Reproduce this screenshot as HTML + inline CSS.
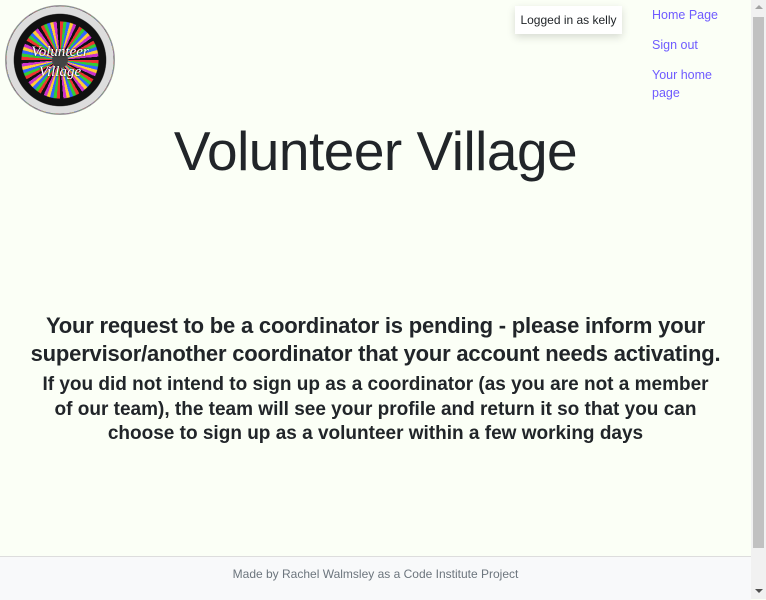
<!DOCTYPE html>
<html><head><meta charset="utf-8"><style>
html,body{margin:0;padding:0;}
body{width:766px;height:599px;overflow:hidden;background:#fbfff6;font-family:"Liberation Sans",sans-serif;color:#212529;position:relative;}
.main{position:absolute;left:0;top:0;width:751px;height:556px;}
.logo{position:absolute;left:5px;top:5px;width:108px;height:108px;border-radius:50%;background:
radial-gradient(circle,#444 0 10%,transparent 11%),
repeating-conic-gradient(#e33 0 5deg,#3c3 5deg 10deg,#36f 10deg 15deg,#fc3 15deg 20deg,#c3c 20deg 25deg,#111 25deg 30deg);border:1px solid #999;overflow:hidden}
.logo:after{content:"";position:absolute;inset:0;border-radius:50%;background:radial-gradient(circle,transparent 0 50%,#111 51% 60%,#ddd 61% 70%,#000 71% 78%,#eee 79% 100%);}
.logo span{position:absolute;z-index:2;color:#fff;font-style:italic;font-size:15px;width:100%;text-align:center;font-family:"Liberation Serif",serif;text-shadow:0 0 2px #000}
.badge{position:absolute;left:515px;top:6px;width:107px;height:28px;background:#fff;box-shadow:0 3px 8px rgba(0,0,0,.15);font-size:12px;line-height:28px;text-align:center;color:#212529}
.nav{position:absolute;left:652px;top:6px;font-size:12.5px;color:#6f5bff;line-height:18px}
.nav div{margin-bottom:12px}
h1{position:absolute;left:0;width:751px;top:118px;margin:0;text-align:center;font-weight:normal;font-size:55px;line-height:66px;letter-spacing:-.5px}
.h2{position:absolute;left:0;width:751px;top:312px;text-align:center;font-size:22px;line-height:28px;font-weight:bold;letter-spacing:-.2px}
.p{position:absolute;left:0;width:751px;top:373px;text-align:center;font-size:19px;line-height:24.5px;font-weight:bold;letter-spacing:0}
footer{position:absolute;left:0;top:556px;width:751px;height:43px;background:#f8f9fa;border-top:1px solid #ddd;text-align:center;font-size:12px;line-height:34px;color:#6c757d}
.sb{position:absolute;left:751px;top:0;width:15px;height:599px;background:#f1f1f1}
.thumb{position:absolute;left:2px;top:17px;width:11px;height:531px;background:#c1c1c1}
</style></head><body>
<div class="main">
<div class="logo"><span style="top:38px">Volunteer</span><span style="top:58px">Village</span></div>
<div class="badge">Logged in as kelly</div>
<div class="nav"><div>Home Page</div><div>Sign out</div><div>Your home<br>page</div></div>
<h1>Volunteer Village</h1>
<div class="h2">Your request to be a coordinator is pending - please inform your<br>supervisor/another coordinator that your account needs activating.</div>
<div class="p">If you did not intend to sign up as a coordinator (as you are not a member<br>of our team), the team will see your profile and return it so that you can<br>choose to sign up as a volunteer within a few working days</div>
</div>
<footer>Made by Rachel Walmsley as a Code Institute Project</footer>
<div class="sb"><div class="thumb"></div>
<div style="position:absolute;left:4px;top:5px;border:4px solid transparent;border-bottom:4px solid #a3a3a3;border-top:0"></div>
<div style="position:absolute;left:4px;top:589px;border:4px solid transparent;border-top:4px solid #505050;border-bottom:0"></div></div>
</body></html>
